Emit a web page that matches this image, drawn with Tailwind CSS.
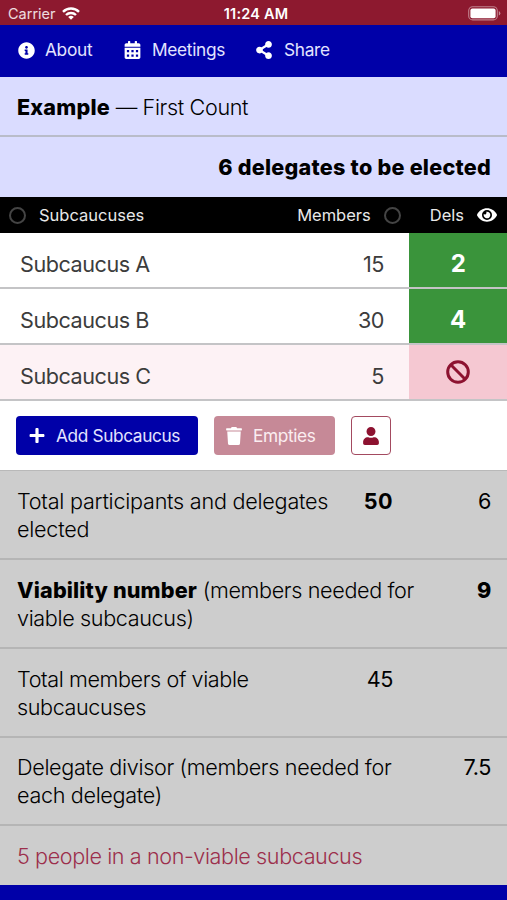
<!DOCTYPE html>
<html lang="en">
<head>
<meta charset="utf-8">
<title>Subcaucus Calculator</title>
<script src="https://cdn.jsdelivr.net/npm/@tailwindcss/browser@4"></script>
</head>
<body class="w-[507px] h-[900px] overflow-hidden flex flex-col bg-[#0000a8] font-['Inter',sans-serif] text-[21.6px] leading-[28px] font-light tracking-[-0.36px] text-black">
<header class="shrink-0 h-[25px] bg-[#8d192f] text-white grid grid-cols-3 items-center text-[14.5px] leading-[20px] font-normal tracking-normal pl-[8px] pr-[6px] pt-[2px]">
  <div class="flex items-center gap-[6px]"><span class="text-white/85">Carrier</span>
    <svg class="w-[18px] h-[13px]" viewBox="0 0 18 13" fill="none" stroke="#fff" stroke-width="2.4"><path d="M1 4.8a11.4 11.4 0 0 1 16 0M4 8a7.2 7.2 0 0 1 10 0"/><path d="M9 12.8 6.2 10a4 4 0 0 1 5.6 0z" fill="#fff" stroke="none"/></svg>
  </div>
  <div class="text-center font-semibold tracking-[0.2px] pl-[3px]">11:24 AM</div>
  <div class="flex justify-end">
    <svg class="w-[33px] h-[15px]" viewBox="0 0 33 15"><rect x=".7" y=".7" width="28.6" height="13.2" rx="4" fill="none" stroke="#fff" stroke-opacity=".45" stroke-width="1.1"/><rect x="2.4" y="2.4" width="25.2" height="9.8" rx="2" fill="#fff"/><path d="M30.8 5v4.6q1.5-.7 1.5-2.3T30.8 5z" fill="#fff" fill-opacity=".5"/></svg>
  </div>
</header>
<nav class="shrink-0 h-[52px] bg-[#0000a8] text-[#e3e4ff] flex items-center text-[17.3px] font-normal tracking-[-0.3px] pl-[18px] pb-[2px]">
  <a class="flex items-center gap-[10px] w-[106px]"><svg class="w-[17px] h-[17px]" viewBox="0 0 512 512" fill="#fff"><path d="M256 8C119.043 8 8 119.083 8 256c0 136.997 111.043 248 248 248s248-111.003 248-248C504 119.083 392.957 8 256 8zm0 110c23.196 0 42 18.804 42 42s-18.804 42-42 42-42-18.804-42-42 18.804-42 42-42zm56 254c0 6.627-5.373 12-12 12h-88c-6.627 0-12-5.373-12-12v-24c0-6.627 5.373-12 12-12h12v-64h-12c-6.627 0-12-5.373-12-12v-24c0-6.627 5.373-12 12-12h64c6.627 0 12 5.373 12 12v100h12c6.627 0 12 5.373 12 12v24z"/></svg>About</a>
  <a class="flex items-center gap-[11px] w-[132px]"><svg class="w-[17px] h-[18px]" viewBox="0 0 448 512" fill="#fff" fill-rule="evenodd"><path d="M400 64h-48V16c0-8.800-7.200-16-16-16h-32c-8.800 0-16 7.200-16 16v48H160V16c0-8.800-7.200-16-16-16h-32c-8.800 0-16 7.200-16 16v48H48C21.500 64 0 85.500 0 112v48h448v-48c0-26.500-21.500-48-48-48zM0 192h448v272c0 26.500-21.500 48-48 48H48c-26.500 0-48-21.500-48-48zM64 256h64v64H64zM192 256h64v64h-64zM320 256h64v64h-64zM64 384h64v64H64zM192 384h64v64h-64zM320 384h64v64h-64z"/></svg>Meetings</a>
  <a class="flex items-center gap-[12px]"><svg class="w-[16px] h-[18px]" viewBox="0 0 448 512" fill="#fff"><path d="M352 320c-22.608 0-43.387 7.819-59.79 20.895l-102.486-64.054a96.551 96.551 0 0 0 0-41.683l102.486-64.054C308.613 184.181 329.392 192 352 192c53.019 0 96-42.981 96-96S405.019 0 352 0s-96 42.981-96 96c0 7.158.79 14.13 2.276 20.841L155.79 180.895C139.387 167.819 118.608 160 96 160c-53.019 0-96 42.981-96 96s42.981 96 96 96c22.608 0 43.387-7.819 59.79-20.895l102.486 64.054A96.301 96.301 0 0 0 256 416c0 53.019 42.981 96 96 96s96-42.981 96-96-42.981-96-96-96z"/></svg>Share</a>
</nav>
<main class="flex flex-col shrink-0">
  <h1 class="h-[60px] bg-[#dadcff] border-b-2 border-[#b9bcc9] px-[17px] pt-[16px]"><b class="font-extrabold tracking-[0.2px]">Example</b> — First Count</h1>
  <h2 class="h-[60px] bg-[#dadcff] px-[16px] pt-[16px] text-right font-extrabold tracking-[0.24px]">6 delegates to be elected</h2>
  <div class="h-[36px] bg-black text-[#e8e8e8] text-[16.5px] font-normal tracking-[0px] flex items-center pl-[9px] pr-[10px]">
    <span class="size-[17px] rounded-full border-2 border-[#444] mr-[13px]"></span>
    <span class="flex-1">Subcaucuses</span>
    <span>Members</span><span class="size-[17px] rounded-full border-2 border-[#444] ml-[13px] mr-[29px]"></span>
    <span class="mr-[13px]">Dels</span>
    <svg class="w-[20px] h-[18px]" viewBox="0 0 576 512" fill="#fff"><path d="M572.52 241.4C518.29 135.59 410.93 64 288 64S57.68 135.64 3.48 241.41a32.35 32.35 0 0 0 0 29.19C57.71 376.41 165.07 448 288 448s230.32-71.64 284.52-177.41a32.35 32.35 0 0 0 0-29.19zM288 400a144 144 0 1 1 144-144 143.93 143.93 0 0 1-144 144zm0-240a95.31 95.31 0 0 0-25.31 3.79 47.85 47.85 0 0 1-66.9 66.9A95.78 95.78 0 1 0 288 160z"/></svg>
  </div>
  <div class="h-[56px] flex border-b-2 border-[#c4c4c6] bg-white text-[#3c3c3c] font-normal tracking-[-0.45px]"><span class="flex-1 pl-[20px] pt-[17px]">Subcaucus A</span><span class="pr-[25px] pt-[17px]">15</span><span class="w-[98px] bg-[#3a943b] text-white text-[24px] font-bold text-center pt-[17px]">2</span></div>
  <div class="h-[56px] flex border-b-2 border-[#c4c4c6] bg-white text-[#3c3c3c] font-normal tracking-[-0.45px]"><span class="flex-1 pl-[20px] pt-[17px]">Subcaucus B</span><span class="pr-[25px] pt-[17px]">30</span><span class="w-[98px] bg-[#3a943b] text-white text-[24px] font-bold text-center pt-[17px]">4</span></div>
  <div class="h-[56px] flex border-b-2 border-[#c4c4c6] bg-[#fdf2f5] text-[#3c3c3c] font-normal tracking-[-0.45px]"><span class="flex-1 pl-[20px] pt-[17px]">Subcaucus C</span><span class="pr-[25px] pt-[17px]">5</span><span class="w-[98px] bg-[#f5c8d2] flex justify-center pt-[15px]"><svg class="w-[24px] h-[24px]" viewBox="0 0 24 24" fill="none" stroke="#8d1230" stroke-width="3"><circle cx="12" cy="12" r="10.300"/><path d="m4.800 4.800 14.400 14.400"/></svg></span></div>
  <div class="h-[69px] bg-white flex items-start pt-[15px] pl-[16px] text-[17.3px] leading-[39px] font-normal tracking-[-0.38px]">
    <button class="w-[182px] h-[39px] rounded-[4px] bg-[#0000a8] text-[#e3e4ff] flex items-center pl-[13px] gap-[11px] mr-[16px]"><svg class="w-[16px] h-[17px]" viewBox="0 0 448 512" fill="#fff"><path d="M416 208H272V64c0-17.670-14.330-32-32-32h-32c-17.670 0-32 14.330-32 32v144H32c-17.670 0-32 14.330-32 32v32c0 17.670 14.330 32 32 32h144v144c0 17.670 14.330 32 32 32h32c17.670 0 32-14.330 32-32V304h144c17.670 0 32-14.330 32-32v-32c0-17.670-14.330-32-32-32z"/></svg>Add Subcaucus</button>
    <button class="w-[121px] h-[39px] rounded-[4px] bg-[#c68997] text-[#fbeef1] flex items-center pl-[12px] gap-[11px] mr-[16px]"><svg class="w-[16px] h-[18px]" viewBox="0 0 448 512" fill="#fff"><path d="M432 32H312l-9.400-18.700A24 24 0 0 0 281.100 0H166.800a23.720 23.720 0 0 0-21.400 13.300L136 32H16A16 16 0 0 0 0 48v32a16 16 0 0 0 16 16h416a16 16 0 0 0 16-16V48a16 16 0 0 0-16-16zM53.200 467a48 48 0 0 0 47.900 45h245.800a48 48 0 0 0 47.900-45L416 128H32z"/></svg>Empties</button>
    <button class="w-[40px] h-[39px] rounded-[4px] border-[1.5px] border-[#a34a60] flex items-center justify-center"><svg class="w-[16px] h-[18px]" viewBox="0 0 448 512" fill="#8d1230"><path d="M224 256c70.700 0 128-57.300 128-128S294.700 0 224 0 96 57.300 96 128s57.300 128 128 128zm89.600 32h-16.700c-22.200 10.200-46.900 16-72.900 16s-50.600-5.800-72.900-16h-16.700C60.200 288 0 348.200 0 422.400V464c0 26.500 21.500 48 48 48h352c26.500 0 48-21.500 48-48v-41.600c0-74.200-60.200-134.400-134.400-134.400z"/></svg></button>
  </div>
  <section class="bg-[#cdcdcd] border-t border-[#b9b9b9]">
    <div class="h-[89px] flex justify-between border-b-2 border-[#b5b5b5] pl-[17px] pr-[16px] pt-[16px]"><p class="tracking-[-0.24px]">Total participants and delegates<br>elected</p><div class="flex"><b class="font-bold tracking-[0.4px]">50</b><span class="w-[98px] text-right font-normal">6</span></div></div>
    <div class="h-[89px] flex justify-between border-b-2 border-[#b5b5b5] pl-[17px] pr-[16px] pt-[16px]"><p><b class="font-extrabold tracking-[0.15px]">Viability number</b> (members needed for<br>viable subcaucus)</p><b class="font-extrabold">9</b></div>
    <div class="h-[89px] flex justify-between border-b-2 border-[#b5b5b5] pl-[17px] pr-[114px] pt-[16px]"><p class="tracking-[-0.4px]">Total members of viable<br>subcaucuses</p><span class="font-normal">45</span></div>
    <div class="h-[88px] flex justify-between border-b-2 border-[#b5b5b5] pl-[17px] pr-[16px] pt-[15px]"><p class="tracking-[-0.33px]">Delegate divisor (members needed for<br>each delegate)</p><span class="font-normal">7.5</span></div>
    <p class="h-[59px] pl-[17px] pt-[16px] text-[#9c2f4c] tracking-[-0.4px]">5 people in a non-viable subcaucus</p>
  </section>
</main>
</body>
</html>
